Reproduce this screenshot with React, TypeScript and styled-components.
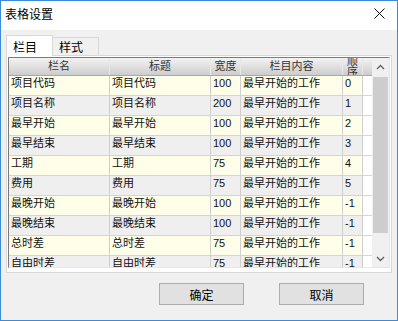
import React from 'react';
import styled, { createGlobalStyle } from 'styled-components';

interface column {
  name: string,
  title: string,
  width: string,
  content: string,
  order: string,
}

const rows: column[] = [
  { name: '项目代码', title: '项目代码', width: '100', content: '最早开始的工作', order: '0' },
  { name: '项目名称', title: '项目名称', width: '200', content: '最早开始的工作', order: '1' },
  { name: '最早开始', title: '最早开始', width: '100', content: '最早开始的工作', order: '2' },
  { name: '最早结束', title: '最早结束', width: '100', content: '最早开始的工作', order: '3' },
  { name: '工期', title: '工期', width: '75', content: '最早开始的工作', order: '4' },
  { name: '费用', title: '费用', width: '75', content: '最早开始的工作', order: '5' },
  { name: '最晚开始', title: '最晚开始', width: '100', content: '最早开始的工作', order: '-1' },
  { name: '最晚结束', title: '最晚结束', width: '100', content: '最早开始的工作', order: '-1' },
  { name: '总时差', title: '总时差', width: '75', content: '最早开始的工作', order: '-1' },
  { name: '自由时差', title: '自由时差', width: '75', content: '最早开始的工作', order: '-1' },
];

const GlobalStyle = createGlobalStyle`
    body {
        margin: 0;
        background: #ffffff;
    }
`;

const Window = styled.div`
    width: 398px;
    height: 321px;
    box-sizing: border-box;
    border: 1px solid #3b8bdb;
    background: #f0f0f0;
    display: flex;
    flex-direction: column;
    font-family: 'Liberation Sans', 'Noto Sans CJK SC', sans-serif;
    color: #000;
`;

const TitleBar = styled.div`
    height: 29px;
    flex-shrink: 0;
    box-sizing: border-box;
    background: #ffffff;
    display: flex;
    align-items: center;
    justify-content: space-between;
    padding: 0 12px 4px 4px;
    font-size: 12px;
`;

const Body = styled.div`
    flex: 1;
    padding: 5px 5px 0;
    display: flex;
    flex-direction: column;
`;

const TabStrip = styled.div`
    display: flex;
    align-items: flex-end;
    height: 21px;
    margin-bottom: -1px;
    position: relative;
    z-index: 1;
`;

const Tab = styled.div<{ $active?: boolean }>`
    box-sizing: border-box;
    display: flex;
    align-items: center;
    padding-left: 6px;
    font-size: 12px;
    border: 1px solid #d9d9d9;
    border-bottom: none;
    width: ${(p) => (p.$active ? '47px' : '46px')};
    height: ${(p) => (p.$active ? '21px' : '18px')};
    margin-bottom: ${(p) => (p.$active ? '0' : '1px')};
    background: ${(p) => (p.$active ? '#ffffff' : '#f0f0f0')};
    ${(p) => (p.$active ? '' : 'border-left: none;')}
`;

const Panel = styled.div`
    height: 218px;
    box-sizing: border-box;
    border: 1px solid #d9d9d9;
    background: #ffffff;
    padding: 1px 1px 4px;
`;

const GridFrame = styled.div`
    height: 211px;
    box-sizing: border-box;
    border: 1px solid;
    border-color: #7a7a7a #e6e6e6 #e6e6e6 #7a7a7a;
    display: flex;
    overflow: hidden;
`;

const Table = styled.div`
    width: 363px;
    display: flex;
    flex-direction: column;
    overflow: hidden;
`;

const RowLayout = styled.div<{ $header?: boolean, $alt?: boolean }>`
    display: grid;
    grid-template-columns: 101px 101px 30px 102px 20px 9px;
    flex-shrink: 0;
    box-sizing: border-box;
    height: ${(p) => (p.$header ? '18px' : '20px')};
    border-bottom: 1px solid ${(p) => (p.$header ? '#a8a8a8' : '#d4d4d4')};
    background: ${(p) => {
    if (p.$header) return 'linear-gradient(to bottom, #f3f3f3, #cdcdcd)';
    return p.$alt ? '#efefef' : '#fffee8';
  }};
`;

const HeadCell = styled.div`
    box-sizing: border-box;
    border-right: 1px solid #e9e9e9;
    display: flex;
    align-items: center;
    justify-content: center;
    text-align: center;
    overflow: hidden;
    font-size: 11px;
    line-height: 11px;
    color: #333;
`;

const Cell = styled.div`
    box-sizing: border-box;
    border-right: 1px solid #cfcfcf;
    padding-left: 2px;
    font-size: 11px;
    line-height: 15px;
    white-space: nowrap;
    overflow: hidden;
    color: #111;
`;

const Filler = styled.div`
    background: #ffffff;
`;

const ScrollBar = styled.div`
    width: 17px;
    flex-shrink: 0;
    background: #f0f0f0;
    display: flex;
    flex-direction: column;
`;

const Arrow = styled.div`
    height: 17px;
    flex-shrink: 0;
    display: flex;
    align-items: center;
    justify-content: center;
`;

const Thumb = styled.div`
    height: 156px;
    margin: 2px 1px 0;
    background: #cdcdcd;
`;

const Spacer = styled.div`
    flex: 1;
`;

const Footer = styled.div`
    display: flex;
    justify-content: flex-end;
    gap: 35px;
    padding: 10px 28px 0 0;
`;

const Button = styled.div`
    width: 85px;
    height: 22px;
    box-sizing: border-box;
    border: 1px solid #adadad;
    background: #e1e1e1;
    display: flex;
    align-items: center;
    justify-content: center;
    font-size: 12px;
`;

function Chevron({ up }: { up?: boolean }) {
  return (
    <svg width="9" height="6" viewBox="0 0 9 6">
      <polyline
        points={up ? '1,5 4.5,1.5 8,5' : '1,1 4.5,4.5 8,1'}
        fill="none"
        stroke="#606060"
        strokeWidth="1.3"
      />
    </svg>
  );
}

function App() {
  return (
    <>
      <GlobalStyle />
      <Window>
        <TitleBar>
          <span>表格设置</span>
          <svg width="11" height="11" viewBox="0 0 11 11">
            <path d="M0.5 0.5 L10.5 10.5 M10.5 0.5 L0.5 10.5" stroke="#111" strokeWidth="1" />
          </svg>
        </TitleBar>
        <Body>
          <TabStrip>
            <Tab $active>栏目</Tab>
            <Tab>样式</Tab>
          </TabStrip>
          <Panel>
            <GridFrame>
              <Table>
                <RowLayout $header>
                  <HeadCell>栏名</HeadCell>
                  <HeadCell>标题</HeadCell>
                  <HeadCell>宽度</HeadCell>
                  <HeadCell>栏目内容</HeadCell>
                  <HeadCell>顺序</HeadCell>
                  <div />
                </RowLayout>
                {rows.map((row, i) => (
                  <RowLayout key={row.name} $alt={i % 2 === 1}>
                    <Cell>{row.name}</Cell>
                    <Cell>{row.title}</Cell>
                    <Cell>{row.width}</Cell>
                    <Cell>{row.content}</Cell>
                    <Cell>{row.order}</Cell>
                    <Filler />
                  </RowLayout>
                ))}
              </Table>
              <ScrollBar>
                <Arrow><Chevron up /></Arrow>
                <Thumb />
                <Spacer />
                <Arrow><Chevron /></Arrow>
              </ScrollBar>
            </GridFrame>
          </Panel>
          <Footer>
            <Button>确定</Button>
            <Button>取消</Button>
          </Footer>
        </Body>
      </Window>
    </>
  );
}

export default App;
